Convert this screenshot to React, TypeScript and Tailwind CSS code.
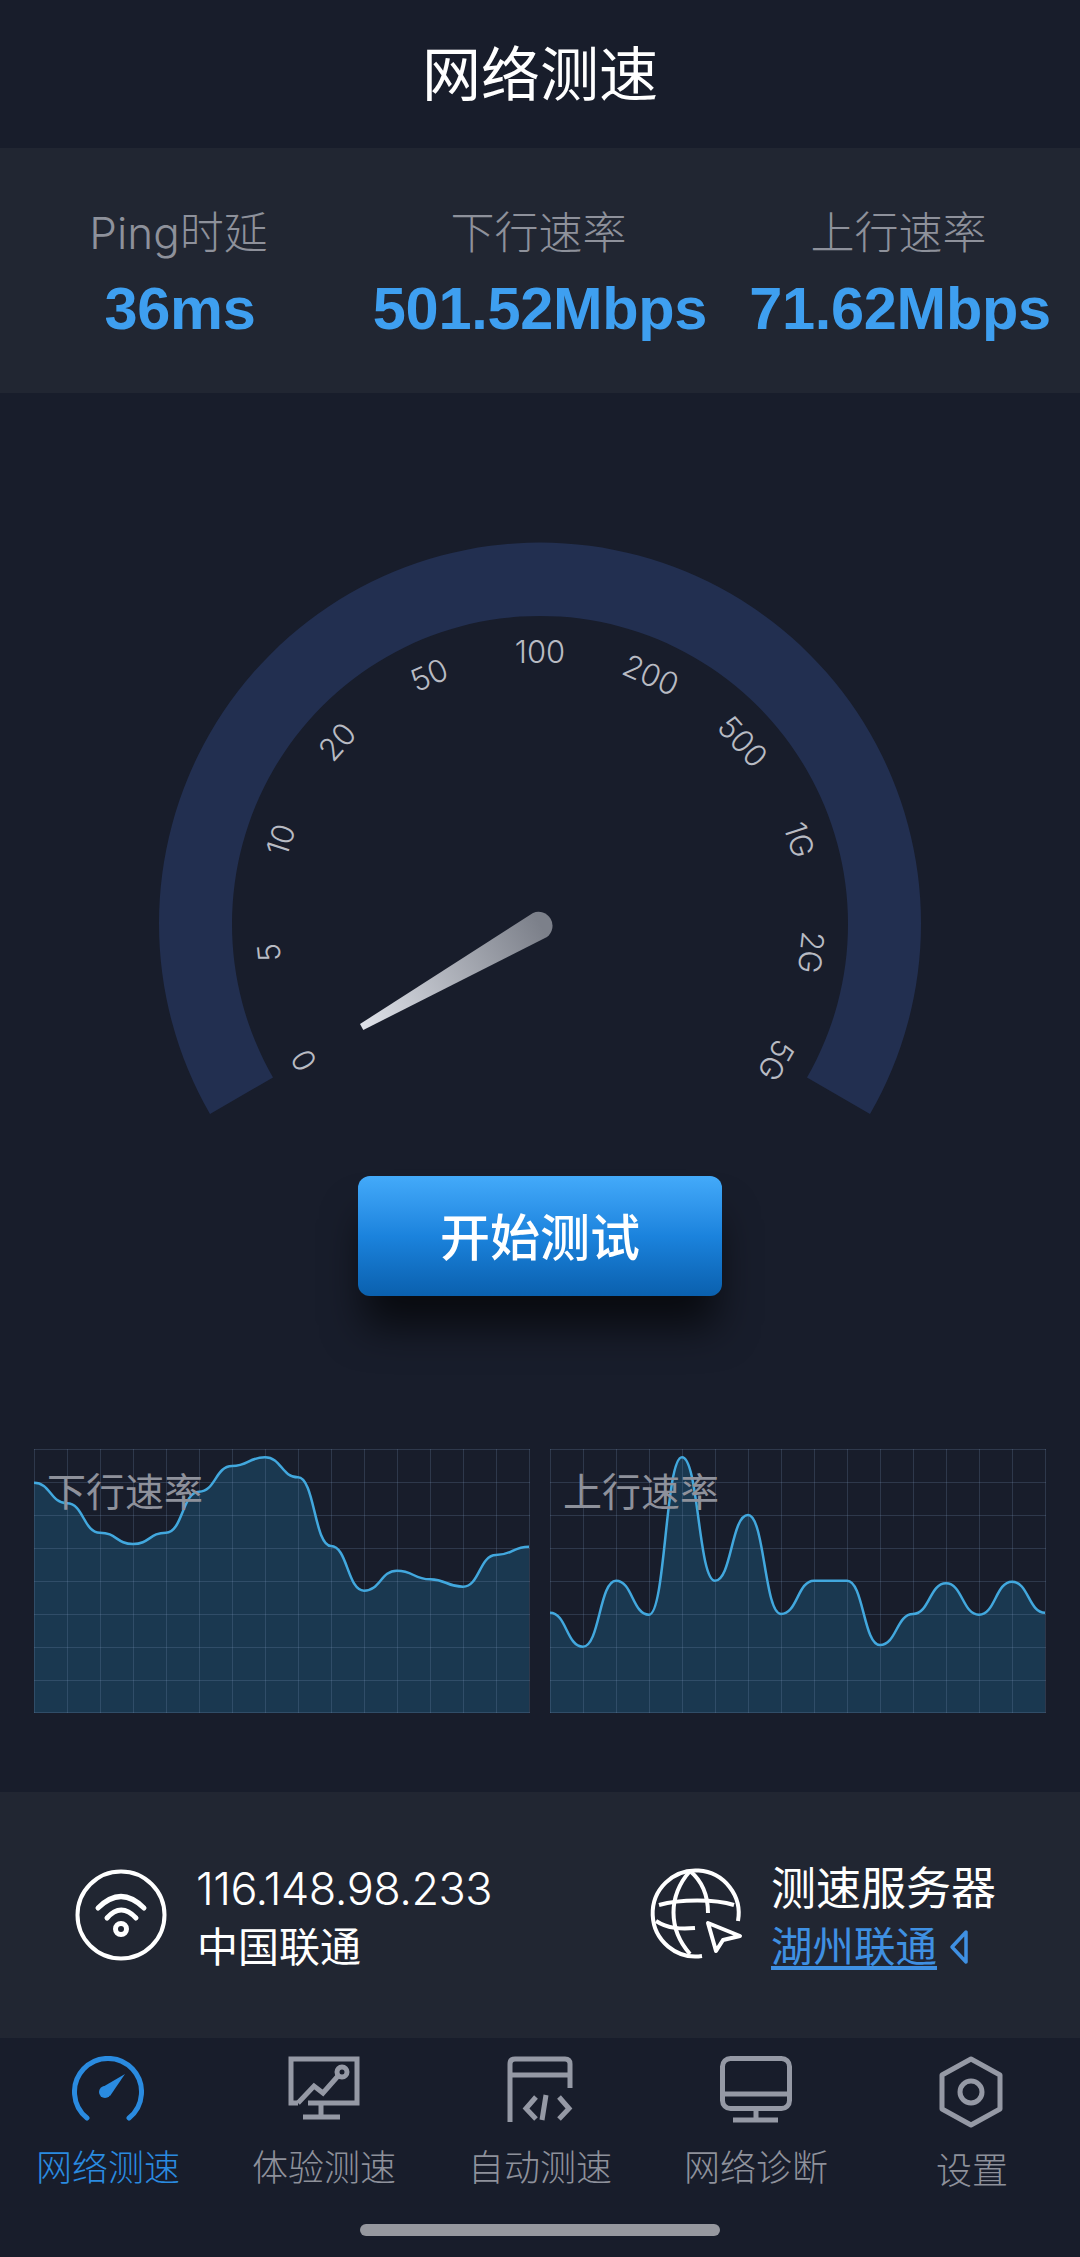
import React from "react";

const ticks = ["0", "5", "10", "20", "50", "100", "200", "500", "1G", "2G", "5G"];

const downData = [33.7, 54.3, 83.7, 95, 83.7, 42.7, 17, 8.3, 28.3, 97, 141.7, 121.7, 130.3, 137.7, 106, 97.7];
const upData = [163.7, 197.7, 131.7, 165.7, 8.3, 131.7, 66, 165, 131.7, 131.7, 196, 165, 134.3, 165.7, 132.7, 163.7];

function curvePath(data: number[]) {
  let d = `M0 ${data[0]}`;
  for (let i = 1; i < data.length; i++) {
    const x0 = (i - 1) * 33;
    const x1 = i * 33;
    d += ` C${x0 + 16.5} ${data[i - 1]} ${x1 - 16.5} ${data[i]} ${x1} ${data[i]}`;
  }
  return d;
}

function Gauge() {
  const cx = 400;
  const cy = 404;
  return (
    <svg width="800" height="620" viewBox="0 0 800 620" className="block mx-auto">
      <defs>
        <linearGradient id="needle" gradientUnits="userSpaceOnUse" x1="222" y1="506" x2="400" y2="404">
          <stop offset="0" stopColor="#dfe2e9" />
          <stop offset="1" stopColor="#7c808a" />
        </linearGradient>
      </defs>
      <path d="M70 594 A381 381 0 1 1 730 594 L667 557.5 A308 308 0 1 0 133 557.5 Z" fill="#222f50" />
      {ticks.map((t, i) => {
        const deg = -120 + i * 24;
        const rad = (deg * Math.PI) / 180;
        const x = cx + 273 * Math.sin(rad);
        const y = cy - 273 * Math.cos(rad);
        return (
          <text
            key={t}
            x={x}
            y={y}
            transform={`rotate(${deg} ${x} ${y})`}
            textAnchor="middle"
            dominantBaseline="central"
            fill="#b8bbc3"
            fontSize="31"
            fontWeight="300"
            fontFamily="Inter, sans-serif"
          >
            {t}
          </text>
        );
      })}
      <path d="M220 504 L223.3 510 L407 417 A14 14 0 0 0 393 393 Z" fill="url(#needle)" />
    </svg>
  );
}

function Chart({ label, data }: { label: string; data: number[] }) {
  const line = curvePath(data);
  return (
    <div className="relative h-[264px] w-[496px]">
      <svg width="496" height="264" viewBox="0 0 496 264" className="block">
        <path d={`${line} V264 H0 Z`} fill="#1a3850" />
        {Array.from({ length: 16 }).map((_, i) => (
          <line key={i} x1={i * 33 + 0.5} x2={i * 33 + 0.5} y1="0" y2="264" stroke="#7f9ac0" strokeOpacity="0.22" />
        ))}
        {Array.from({ length: 9 }).map((_, i) => (
          <line key={i} x1="0" x2="496" y1={i * 33 + 0.5 - (i === 8 ? 1 : 0)} y2={i * 33 + 0.5 - (i === 8 ? 1 : 0)} stroke="#7f9ac0" strokeOpacity="0.22" />
        ))}
        <path d={line} fill="none" stroke="#42a8de" strokeWidth="2.5" />
      </svg>
      <span className="absolute left-[13px] top-[23px] text-[39px] leading-[39px] font-normal text-[#8e919b]">{label}</span>
    </div>
  );
}

function WifiIcon() {
  return (
    <svg width="110" height="110" viewBox="0 0 110 110" fill="none" stroke="#fff" className="shrink-0">
      <circle cx="55" cy="54" r="43.5" strokeWidth="4" />
      <path d="M32 47 Q55 24 78 47" strokeWidth="5" strokeLinecap="round" />
      <path d="M41 57 Q55 41 70 57" strokeWidth="5" strokeLinecap="round" />
      <circle cx="55" cy="68" r="5.5" strokeWidth="5" />
    </svg>
  );
}

function GlobeIcon() {
  return (
    <svg width="110" height="110" viewBox="0 0 110 110" fill="none" stroke="#fff" strokeWidth="4" className="shrink-0">
      <path d="M98 60 A43 43 0 1 0 62 95" />
      <path d="M50 10 C28 35 28 68 50 93" />
      <path d="M50 10 C62 20 68 35 68 52" />
      <path d="M19 44 C40 38 75 38 94 44" />
      <path d="M16 60 C28 68 42 68 55 67" />
      <path d="M68 62 L100 75 L83 79 L76 90 Z" strokeLinejoin="round" />
    </svg>
  );
}

const navIcons: Record<string, React.ReactNode> = {
  speed: (
    <svg width="72" height="72" viewBox="0 0 72 72" fill="none" stroke="#2a8be0" strokeWidth="5" strokeLinecap="round">
      <path d="M15 62 A33.5 33.5 0 1 1 57 62" />
      <path d="M53 18 L38 40 L29 32 Z" fill="#2a8be0" stroke="none" />
      <circle cx="33" cy="36" r="6" fill="#2a8be0" stroke="none" />
    </svg>
  ),
  chart: (
    <svg width="72" height="72" viewBox="0 0 72 72" fill="none" stroke="#9599a5" strokeWidth="5">
      <path d="M10 47 H3 V3 H69 V47 H20" />
      <path d="M10 47 L26 30 L35 37 L50 20" />
      <circle cx="54" cy="16" r="5" />
      <path d="M33 47 V61 M15 61 H52" />
    </svg>
  ),
  code: (
    <svg width="72" height="72" viewBox="0 0 72 72" fill="none" stroke="#9599a5" strokeWidth="5">
      <path d="M6 66 V8 Q6 3 11 3 H61 Q66 3 66 8 V32 M6 19 H66" />
      <path d="M32 41 L22 52.5 L32 63 M42 39 L38 64 M55 41 L65 52.5 L55 63" />
    </svg>
  ),
  monitor: (
    <svg width="72" height="72" viewBox="0 0 72 72" fill="none" stroke="#9599a5" strokeWidth="5">
      <rect x="2.5" y="2.5" width="67" height="50" rx="8" />
      <path d="M2.5 38 H69.5 M36 52 V64 M13 64 H58" />
    </svg>
  ),
  hex: (
    <svg width="72" height="72" viewBox="0 0 72 72" fill="none" stroke="#9599a5" strokeWidth="5" strokeLinejoin="round">
      <path d="M35 3 L64 19 V53 L35 69 L6 53 V19 Z" />
      <circle cx="35" cy="36" r="11" />
    </svg>
  ),
};

const navItems = [
  { icon: "speed", label: "网络测速", active: true },
  { icon: "chart", label: "体验测速" },
  { icon: "code", label: "自动测速" },
  { icon: "monitor", label: "网络诊断" },
  { icon: "hex", label: "设置", low: true },
];

const stats = [
  { label: "Ping时延", value: "36ms" },
  { label: "下行速率", value: "501.52Mbps" },
  { label: "上行速率", value: "71.62Mbps" },
];

export default function App() {
  return (
    <div className="relative flex h-[2257px] w-[1080px] flex-col overflow-hidden bg-[#181d2b] font-['Inter','Noto_Sans_CJK_SC',sans-serif] text-white">
      <header className="flex h-[148px] items-center justify-center pt-[3px] text-[59px] font-normal">网络测速</header>

      <section className="grid h-[245px] grid-cols-3 bg-[#212632] pt-[60px] text-center">
        {stats.map((s) => (
          <div key={s.label}>
            <div className="pr-[3px] text-[44px] leading-[50px] font-light text-[#8e919b]">{s.label}</div>
            <div className="mt-[17px] font-['Liberation_Sans',sans-serif] text-[59.5px] leading-[68px] font-bold tracking-[-0.3px] text-[#3e9ff0]">{s.value}</div>
          </div>
        ))}
      </section>

      <main className="flex-1 pt-[127px]">
        <Gauge />
        <button className="mx-auto mt-[36px] block h-[120px] w-[364px] rounded-[12px] bg-gradient-to-b from-[#43aafa] via-[#1b83dd] to-[#0a60ae] pt-[5px] text-[50px] font-medium text-white shadow-[0_36px_40px_-6px_rgba(0,0,0,0.65)]">
          开始测试
        </button>
        <div className="mt-[153px] flex gap-[20px] px-[34px]">
          <Chart label="下行速率" data={downData} />
          <Chart label="上行速率" data={upData} />
        </div>
      </main>

      <section className="flex h-[246px] items-center bg-[#212632] pl-[66px] pt-[5px]">
        <div className="-mt-[3px] shrink-0">
          <WifiIcon />
        </div>
        <div className="ml-[20px] w-[444px]">
          <div className="text-[45px] leading-[58px] font-light tracking-[-0.5px]">116.148.98.233</div>
          <div className="pl-[1px] text-[41px] leading-[58px] font-normal">中国联通</div>
        </div>
        <div className="-mt-[3px] shrink-0">
          <GlobeIcon />
        </div>
        <div className="ml-[21px]">
          <div className="text-[45px] leading-[58px] font-normal">测速服务器</div>
          <div className="flex items-center text-[41.5px] leading-[58px] font-normal text-[#3f90e2]">
            <span className="underline underline-offset-[4px]">湖州联通</span>
            <svg width="20" height="36" viewBox="0 0 20 36" fill="none" stroke="#3f90e2" strokeWidth="3.5" className="ml-[12px]">
              <path d="M17 3 V33 L3 18 Z" strokeLinejoin="round" />
            </svg>
          </div>
        </div>
      </section>

      <nav className="relative grid h-[219px] grid-cols-5 pt-[18px]">
        {navItems.map((n) => (
          <div key={n.label} className="flex flex-col items-center">
            {navIcons[n.icon]}
            <span
              className={`text-[36px] leading-[44px] font-light ${n.low ? "mt-[21px]" : "mt-[18px]"} ${n.active ? "text-[#2a8be0]" : "text-[#8e919b]"}`}
            >
              {n.label}
            </span>
          </div>
        ))}
        <div className="absolute bottom-[21px] left-[360px] h-[12px] w-[360px] rounded-full bg-[#96989f]" />
      </nav>
    </div>
  );
}
